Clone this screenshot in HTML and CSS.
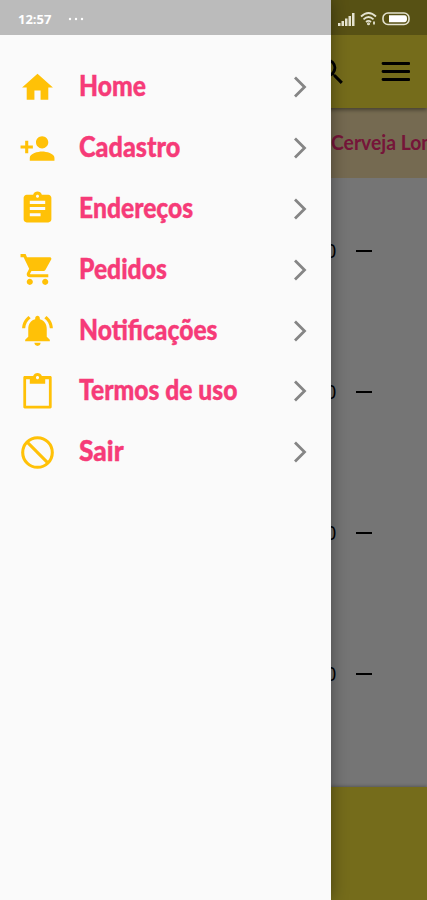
FILE: index.html
```html
<!DOCTYPE html>
<html lang="pt-BR">
<head>
  <meta charset="UTF-8">
  <meta name="viewport" content="width=device-width, initial-scale=1">
  <title>Menu</title>
  <link rel="stylesheet" href="styles.css">
</head>
<body>
  <div class="phone">
    <!-- Tela principal -->
    <div class="app">
      <header class="app-bar">
        <svg class="icon-search" viewBox="0 0 24 24"><path d="M15.5 14h-.79l-.28-.27A6.471 6.471 0 0 0 16 9.5 6.5 6.5 0 1 0 9.5 16c1.61 0 3.09-.59 4.23-1.57l.27.28v.79l5 4.99L20.49 19l-4.99-5zm-6 0C7.01 14 5 11.99 5 9.5S7.01 5 9.5 5 14 7.01 14 9.5 11.99 14 9.5 14z"/></svg>
        <svg class="icon-menu" viewBox="0 0 28 20"><path d="M1.5 1.5h26M1.5 9.5h26M1.5 17.5h26"/></svg>
      </header>
      <nav class="tabs"><span>Cerveja Lon</span></nav>
      <main class="products">
        <div class="product"><span class="qty">0</span><span class="minus"></span></div>
        <div class="product"><span class="qty">0</span><span class="minus"></span></div>
        <div class="product"><span class="qty">0</span><span class="minus"></span></div>
        <div class="product"><span class="qty">0</span><span class="minus"></span></div>
      </main>
      <footer class="bottom-bar"></footer>
    </div>
    <div class="scrim"></div>

    <!-- Menu lateral -->
    <aside class="drawer">
      <a class="item">
        <svg class="icon" viewBox="0 0 24 24"><path d="M10 20v-6h4v6h5v-8h3L12 3 2 12h3v8z"/></svg>
        <span class="label">Home</span>
        <svg class="chevron" viewBox="0 0 14 22"><path d="M2 1.5l9.5 9.5L2 20.5"/></svg>
      </a>
      <a class="item">
        <svg class="icon" viewBox="0 0 24 24"><path d="M15 12c2.21 0 4-1.79 4-4s-1.79-4-4-4-4 1.79-4 4 1.79 4 4 4zm-9-2V7H4v3H1v2h3v3h2v-3h3v-2H6zm9 4c-2.67 0-8 1.34-8 4v2h16v-2c0-2.66-5.33-4-8-4z"/></svg>
        <span class="label cadastro">Cadastro</span>
        <svg class="chevron" viewBox="0 0 14 22"><path d="M2 1.5l9.5 9.5L2 20.5"/></svg>
      </a>
      <a class="item">
        <svg class="icon" viewBox="0 0 24 24"><path d="M19 3h-4.18C14.4 1.84 13.3 1 12 1c-1.3 0-2.4.84-2.82 2H5c-1.1 0-2 .9-2 2v14c0 1.1.9 2 2 2h14c1.1 0 2-.9 2-2V5c0-1.1-.9-2-2-2zm-7 0c.55 0 1 .45 1 1s-.45 1-1 1-1-.45-1-1 .45-1 1-1zm2 14H7v-2h7v2zm3-4H7v-2h10v2zm0-4H7V7h10v2z"/></svg>
        <span class="label">Endereços</span>
        <svg class="chevron" viewBox="0 0 14 22"><path d="M2 1.5l9.5 9.5L2 20.5"/></svg>
      </a>
      <a class="item">
        <svg class="icon" viewBox="0 0 24 24"><path d="M7 18c-1.1 0-1.99.9-1.99 2S5.9 22 7 22s2-.9 2-2-.9-2-2-2zM1 2v2h2l3.6 7.59-1.35 2.45c-.16.28-.25.61-.25.96 0 1.1.9 2 2 2h12v-2H7.42c-.14 0-.25-.11-.25-.25l.03-.12.9-1.63h7.45c.75 0 1.41-.41 1.75-1.03l3.58-6.49c.08-.14.12-.31.12-.48 0-.55-.45-1-1-1H5.21l-.94-2H1zm16 16c-1.1 0-1.99.9-1.99 2s.89 2 1.99 2 2-.9 2-2-.9-2-2-2z"/></svg>
        <span class="label">Pedidos</span>
        <svg class="chevron" viewBox="0 0 14 22"><path d="M2 1.5l9.5 9.5L2 20.5"/></svg>
      </a>
      <a class="item">
        <svg class="icon" viewBox="0 0 24 24"><path d="M7.58 4.08L6.15 2.65C3.75 4.48 2.17 7.3 2.03 10.5h2c.15-2.65 1.51-4.97 3.55-6.42zm12.39 6.42h2c-.15-3.2-1.73-6.02-4.12-7.85l-1.42 1.43c2.02 1.45 3.39 3.77 3.54 6.42zM18 11c0-3.07-1.64-5.64-4.5-6.32V4c0-.83-.67-1.5-1.5-1.5s-1.5.67-1.5 1.5v.68C7.63 5.36 6 7.92 6 11v5l-2 2v1h16v-1l-2-2v-5zm-6 11c.14 0 .27-.01.4-.04.65-.14 1.18-.58 1.44-1.18.1-.24.15-.5.15-.78h-4c.01 1.1.9 2 2.01 2z"/></svg>
        <span class="label">Notificações</span>
        <svg class="chevron" viewBox="0 0 14 22"><path d="M2 1.5l9.5 9.5L2 20.5"/></svg>
      </a>
      <a class="item">
        <svg class="icon" viewBox="0 0 24 24"><path d="M14.82 2C14.4.84 13.3 0 12 0S9.6.84 9.18 2H3.7c-.5 0-.9.4-.9.9v19.2c0 .5.4.9.9.9h16.6c.5 0 .9-.4.9-.9V2.9c0-.5-.4-.9-.9-.9h-5.48zM12 2c.55 0 1 .45 1 1s-.45 1-1 1-1-.45-1-1 .45-1 1-1zm7.4 19.2H4.6V4H7v3h10V4h2.4v17.2z"/></svg>
        <span class="label">Termos de uso</span>
        <svg class="chevron" viewBox="0 0 14 22"><path d="M2 1.5l9.5 9.5L2 20.5"/></svg>
      </a>
      <a class="item">
        <svg class="icon icon-line" viewBox="0 0 24 24"><circle cx="12" cy="12" r="9.6"/><path d="M5.3 5.3l13.4 13.4"/></svg>
        <span class="label sair">Sair</span>
        <svg class="chevron" viewBox="0 0 14 22"><path d="M2 1.5l9.5 9.5L2 20.5"/></svg>
      </a>
    </aside>

    <!-- Barra de status -->
    <div class="status-bar">
      <span class="clock">12:57</span>
      <svg class="dots" viewBox="0 0 16 4"><circle cx="2" cy="2" r="1.2"/><circle cx="8" cy="2" r="1.2"/><circle cx="14" cy="2" r="1.2"/></svg>
      <div class="status-icons">
        <svg class="signal" viewBox="0 0 17 13"><path d="M0 10h2.5v3H0zM3.5 8H6v5H3.5zM7 5.5h2.5V13H7zM10.5 3H13v10h-2.5zM14 0h2.5v13H14z"/></svg>
        <svg class="wifi" viewBox="0 0 17 14"><path d="M1 4.5q7.5-7 15 0M3.5 7.3q5-4.5 10 0M6 10q2.5-2.2 5 0"/><circle cx="8.5" cy="11.8" r=".6"/><path d="M14 9.5v3"/></svg>
        <svg class="battery" viewBox="0 0 28 14"><rect x="1" y="1" width="26" height="11.5" rx="5"/><path d="M7 3.3h15.5q2.5 0 2.5 3.45t-2.5 3.45H7z"/></svg>
      </div>
    </div>
  </div>
</body>
</html>
```

FILE: styles.css
```css
body {
  margin: 0;
  font-family: "Open Sans", "Noto Sans", sans-serif;
}
.phone {
  position: relative;
  width: 427px;
  height: 900px;
  overflow: hidden;
}
/* Tela principal */
.app {
  display: flex;
  flex-direction: column;
  height: 100%;
  background: #fefefe;
  isolation: isolate;
}
.app-bar {
  display: flex;
  align-items: center;
  justify-content: flex-end;
  gap: 33px;
  height: 108px;
  padding: 35px 17px 0 0;
  box-sizing: border-box;
  background: #ffeb3b;
  box-shadow: 0 2px 4px rgba(0, 0, 0, 0.4);
  z-index: 1;
}
.icon-search {
  width: 35px;
  height: 35px;
}
.icon-menu {
  width: 29px;
  height: 20px;
  fill: none;
  stroke: #000;
  stroke-width: 2.8;
  stroke-linecap: round;
}
.tabs {
  display: flex;
  align-items: center;
  height: 70px;
  padding-left: 331px;
  background: #ffe8b0;
}
.tabs span {
  font-family: Lato, sans-serif;
  font-size: 21px;
  line-height: 28px;
  padding-bottom: 2px;
  font-weight: bold;
  color: #ff2f7c;
  white-space: nowrap;
  transform: scaleX(0.92);
  transform-origin: left;
}
.products {
  flex: 1;
  padding-top: 2px;
}
.product {
  display: flex;
  align-items: center;
  gap: 19px;
  height: 141px;
  padding-left: 325px;
}
.qty {
  width: 12px;
  font-size: 20px;
}
.minus {
  width: 16px;
  height: 2px;
  background: #000;
}
.bottom-bar {
  height: 113px;
  background: #ffeb3b;
  box-shadow: 0 -1px 3px rgba(0, 0, 0, 0.25);
}
.scrim {
  position: absolute;
  inset: 0;
  background: rgba(0, 0, 0, 0.54);
}
/* Menu lateral */
.drawer {
  position: absolute;
  top: 0;
  left: 0;
  width: 331px;
  height: 100%;
  padding-top: 57px;
  box-sizing: border-box;
  background: #fafafa;
  box-shadow: 0 0 16px rgba(0, 0, 0, 0.4);
}
.item {
  display: flex;
  align-items: center;
  height: 60.8px;
  padding: 0 24px 0 19px;
}
.icon {
  width: 37px;
  height: 37px;
  margin-right: 23px;
  fill: #ffc107;
}
.icon-line {
  fill: none;
  stroke: #ffc107;
  stroke-width: 2;
}
.label {
  flex: 1;
  padding-bottom: 4px;
  font-family: Lato, sans-serif;
  font-size: 28px;
  font-weight: 900;
  -webkit-text-stroke: 0.4px #f63b78;
  color: #f63b78;
  white-space: nowrap;
  transform: scaleX(0.88);
  transform-origin: left;
}
.label.cadastro {
  transform: scaleX(0.9);
}
.label.sair {
  transform: scaleX(0.94);
}
.chevron {
  width: 14px;
  height: 22px;
  fill: none;
  stroke: #858585;
  stroke-width: 2.8;
}
/* Barra de status */
.status-bar {
  position: absolute;
  top: 0;
  left: 0;
  display: flex;
  align-items: center;
  width: 100%;
  height: 35px;
  padding: 3px 17px 0 18px;
  box-sizing: border-box;
  background: rgba(0, 0, 0, 0.25);
  color: #fff;
}
.clock {
  font-size: 13px;
  font-weight: bold;
  width: 50px;
}
.dots {
  width: 16px;
  height: 4px;
  fill: #fff;
}
.status-icons {
  display: flex;
  align-items: center;
  gap: 5px;
  margin-left: auto;
}
.signal {
  width: 17px;
  height: 13px;
  fill: #e4e2cf;
}
.wifi {
  width: 17px;
  height: 14px;
  fill: none;
  stroke: #e4e2cf;
  stroke-width: 1.8;
}
.battery {
  width: 28px;
  height: 14px;
  fill: none;
  stroke: #e4e2cf;
  stroke-width: 1.6;
}
.battery path {
  fill: #fff;
  stroke: none;
}
```
